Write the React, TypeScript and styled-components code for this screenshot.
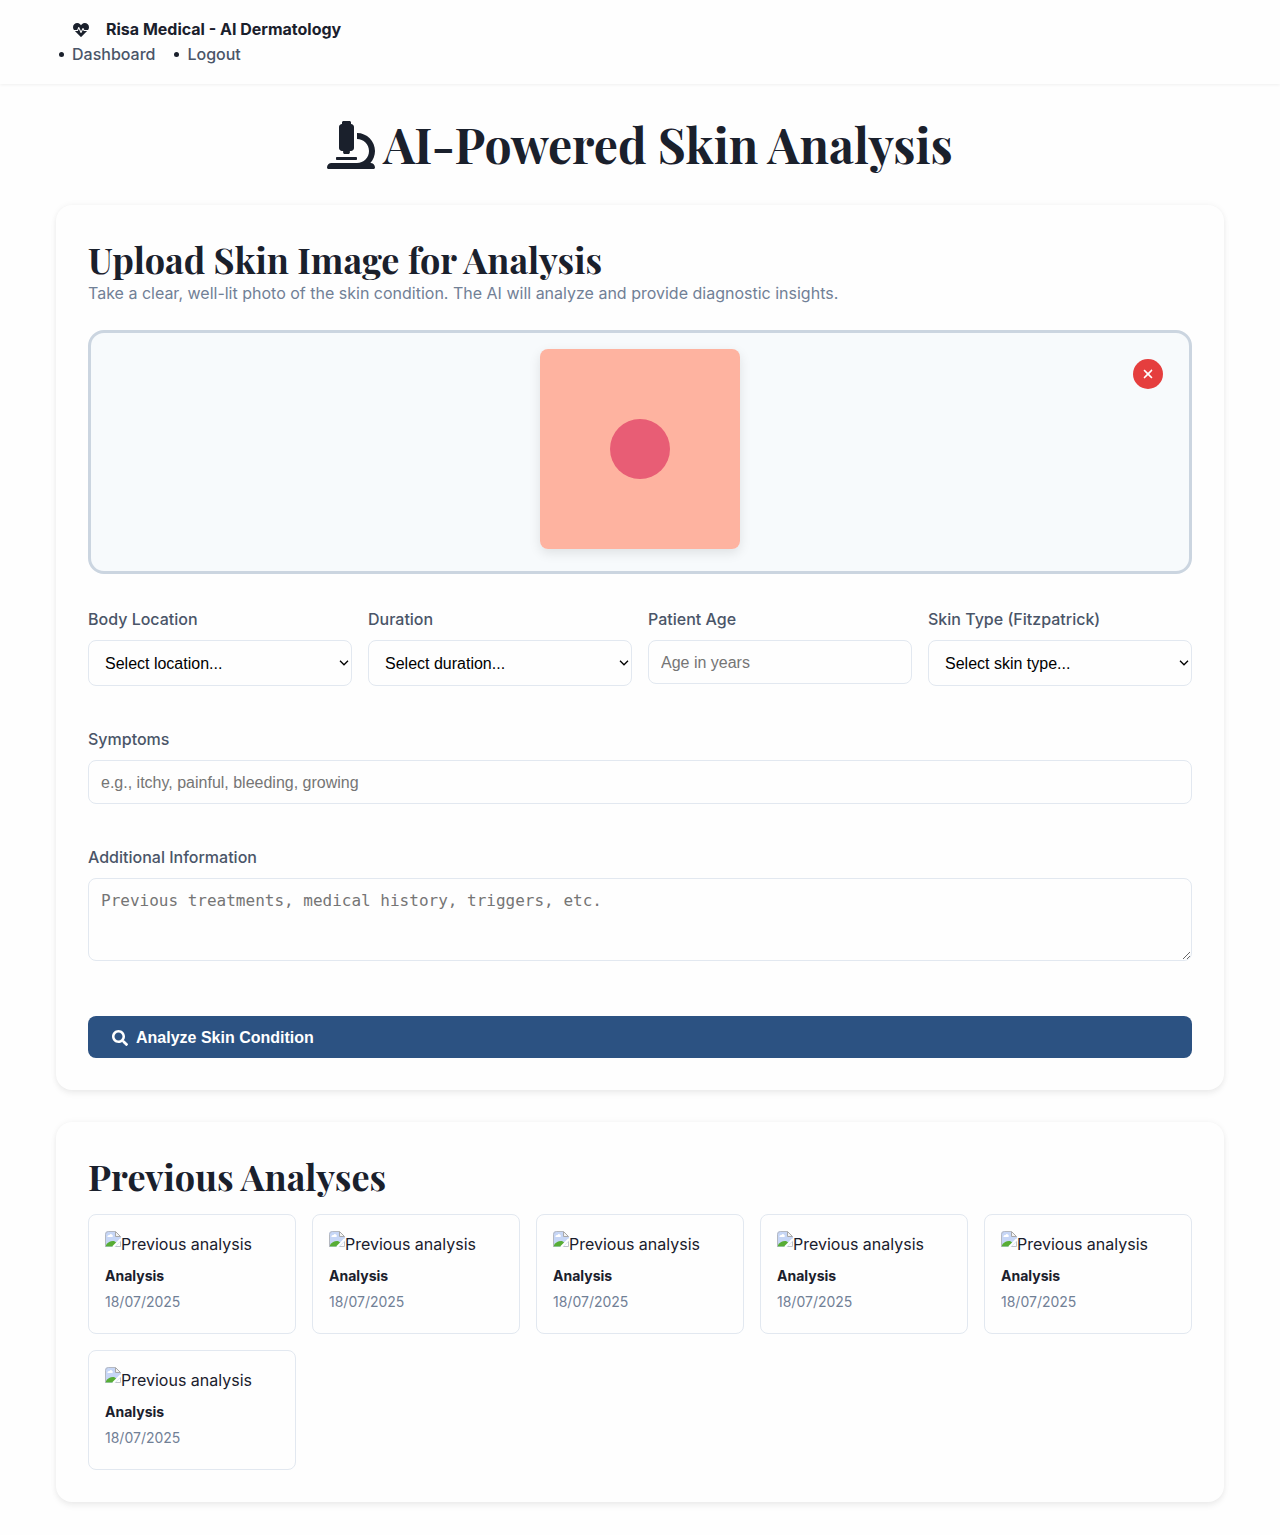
import React, { useState } from "react";
import styled, { createGlobalStyle } from "styled-components";
import { FaHeartbeat, FaMicroscope, FaSearch } from "react-icons/fa";
import { FaXmark } from "react-icons/fa6";

const sans = `Inter, "Liberation Sans", sans-serif`;
const control = `"Liberation Sans", Arial, sans-serif`;
const display = `"Playfair Display", "Liberation Serif", serif`;

const GlobalStyle = createGlobalStyle`
  *, *::before, *::after { box-sizing: border-box; }
  body {
    margin: 0;
    background: #fefefe;
    color: #1a202c;
    font-family: ${sans};
    font-size: 16px;
    line-height: 26px;
  }
  h1, h2, h3, p, ul { margin: 0; padding: 0; }
`;

const Header = styled.header`
  background: #fefefe;
  box-shadow: 0 1px 3px rgba(0, 0, 0, 0.06);
  padding: 17px 0;
  line-height: 25px;
`;

const Container = styled.div`
  max-width: 1200px;
  margin: 0 auto;
  padding: 0 16px;
`;

const Brand = styled.div`
  display: flex;
  align-items: center;
  gap: 17px;
  padding-left: 17px;
  font-weight: 700;
`;

const NavList = styled.ul`
  display: flex;
  gap: 19px;
  list-style: none;
  && { padding-left: 3px; }
`;

const NavItem = styled.li`
  display: flex;
  align-items: center;
  gap: 8px;

  &::before {
    content: "";
    width: 5px;
    height: 5px;
    border-radius: 50%;
    background: #1a202c;
  }
`;

const NavLink = styled.a`
  color: #4a5568;
  font-weight: 500;
  text-decoration: none;
`;

const Main = styled.main`
  display: flex;
  flex-direction: column;
  gap: 32px;
  padding-top: 32px;
  padding-bottom: 32px;
`;

const PageTitle = styled.h1`
  display: flex;
  align-items: center;
  justify-content: center;
  gap: 8px;
  font-family: ${display};
  font-size: 48px;
  font-weight: 700;
  line-height: 57px;
`;

const Card = styled.section`
  padding: 32px;
  border-radius: 16px;
  background: #fefefe;
  box-shadow: 0 4px 6px rgba(0, 0, 0, 0.05), 0 0 6px rgba(0, 0, 0, 0.05);
`;

const CardTitle = styled.h2`
  font-family: ${display};
  font-size: 36px;
  font-weight: 700;
  line-height: 44px;
`;

const Hint = styled.p`
  color: #718096;
  line-height: 25px;
`;

const UploadArea = styled.div`
  position: relative;
  display: flex;
  justify-content: center;
  margin: 24px 0 32px;
  padding: 16px 16px 22px;
  border: 3px solid #cbd5e0;
  border-radius: 16px;
  background: #f7fafc;
`;

const Preview = styled.svg`
  width: 200px;
  height: 200px;
  border-radius: 8px;
  box-shadow: 0 4px 12px rgba(0, 0, 0, 0.1);
`;

const RemoveButton = styled.button`
  position: absolute;
  top: 26px;
  right: 26px;
  display: flex;
  align-items: center;
  justify-content: center;
  width: 30px;
  height: 30px;
  padding: 0;
  border: 0;
  border-radius: 50%;
  background: #e53e3e;
  color: #fff;
  font-size: 14px;
  cursor: pointer;
`;

const Form = styled.form`
  display: flex;
  flex-direction: column;
  gap: 40px;
`;

const FieldGrid = styled.div`
  display: grid;
  grid-template-columns: repeat(auto-fit, minmax(250px, 1fr));
  align-items: start;
  gap: 16px;
`;

const Field = styled.div`
  display: flex;
  flex-direction: column;
  gap: 8px;
`;

const Label = styled.label`
  color: #4a5568;
  font-weight: 500;
`;

const Input = styled.input`
  width: 100%;
  height: 44px;
  padding: 13px 12px 11px;
  border: 1px solid #e2e8f0;
  border-radius: 8px;
  background: #fefefe;
  font-family: ${control};
  font-size: 16px;
`;

const SelectBox = styled.div`
  position: relative;
  display: grid;
`;

const Select = styled.select`
  appearance: none;
  width: 100%;
  height: 46px;
  padding: 12px 24px 12px 16px;
  border: 1px solid #e2e8f0;
  border-radius: 8px;
  background: #fefefe;
  color: #000;
  font-family: ${control};
  font-size: 16px;
`;

const Chevron = styled.svg`
  position: absolute;
  top: 20px;
  right: 3px;
  width: 10px;
  height: 6px;
  pointer-events: none;
`;

const TextArea = styled.textarea`
  width: 100%;
  height: 83px;
  padding: 12px;
  border: 1px solid #e2e8f0;
  border-radius: 8px;
  background: #fefefe;
  font-family: "DejaVu Sans Mono", monospace;
  font-size: 16px;
  resize: vertical;
`;

const SubmitButton = styled.button`
  display: flex;
  align-items: center;
  gap: 8px;
  height: 42px;
  margin-top: 15px;
  padding: 2px 24px 0;
  border: 0;
  border-radius: 8px;
  background: #2c5282;
  color: #fff;
  font-family: ${control};
  font-size: 16px;
  font-weight: 700;
  cursor: pointer;
`;

const HistoryGrid = styled.div`
  display: grid;
  grid-template-columns: repeat(auto-fill, minmax(200px, 1fr));
  gap: 16px;
  margin-top: 16px;
`;

const HistoryItem = styled.article`
  display: flex;
  flex-direction: column;
  padding: 16px 16px 20px;
  border: 1px solid #e2e8f0;
  border-radius: 8px;
`;

const Thumb = styled.div`
  display: flex;
  align-items: flex-start;
  margin-bottom: 8px;
`;

const ItemTitle = styled.h3`
  margin-bottom: 4px;
  font-size: 14px;
  font-weight: 700;
  line-height: 22px;
`;

const ItemDate = styled.p`
  color: #718096;
  font-size: 14px;
  line-height: 22px;
`;

const MissingImageIcon = () => (
  <svg width="16" height="16" viewBox="0 0 16 16" aria-hidden="true">
    <path d="M3.500 0H10l6 6v4l-6 6H0V3.500A3.500 3.500 0 0 1 3.500 0z" fill="#c6d6f6" />
    <path d="M0.500 16V3.500a3 3 0 0 1 3-3H10" fill="none" stroke="#b4b8c0" />
    <path d="M2.500 6a1.600 1.600 0 0 1 2-2 1.800 1.800 0 0 1 3 2z" fill="#fff" />
    <path d="M1 15.500V14c2-3 5-4.500 8-4l3 2-3.500 3.500z" fill="#57ad35" />
    <path d="M10.500 0.500l5 5h-5z" fill="#f3f3f3" stroke="#a8a8a8" />
    <path d="M8 16l8-8" stroke="#fff" strokeWidth="2" />
    <path d="M10.500 15.500h5v-5" fill="none" stroke="#c0c4cb" />
  </svg>
);

const selects = {
  location: ["Select location...", "Face", "Neck", "Chest", "Back", "Arms", "Legs"],
  duration: ["Select duration...", "Less than 1 week", "1-4 weeks", "1-6 months"],
  skinType: ["Select skin type...", "Type I", "Type II", "Type III", "Type IV", "Type V", "Type VI"],
};

type SelectFieldProps = { id: string; label: string; options: string[] };

const SelectField = ({ id, label, options }: SelectFieldProps) => (
  <Field>
    <Label htmlFor={id}>{label}</Label>
    <SelectBox>
      <Select id={id}>
        {options.map((option) => (
          <option key={option}>{option}</option>
        ))}
      </Select>
      <Chevron viewBox="0 0 10 6" aria-hidden="true">
        <path d="M1 0.800l4 4 4-4" fill="none" stroke="#000" strokeWidth="1.300" />
      </Chevron>
    </SelectBox>
  </Field>
);

const history = Array.from({ length: 6 }, (_, id) => ({ id, date: "18/07/2025" }));

export default function App() {
  const [hasImage, setHasImage] = useState(true);

  return (
    <>
      <GlobalStyle />
      <Header>
        <Container>
          <Brand>
            <FaHeartbeat size={16} />
            <span>Risa Medical - AI Dermatology</span>
          </Brand>
          <nav>
            <NavList>
              <NavItem><NavLink href="#dashboard">Dashboard</NavLink></NavItem>
              <NavItem><NavLink href="#logout">Logout</NavLink></NavItem>
            </NavList>
          </nav>
        </Container>
      </Header>
      <Container>
        <Main>
          <PageTitle>
            <FaMicroscope size={48} />
            <span>AI-Powered Skin Analysis</span>
          </PageTitle>

          <Card>
            <CardTitle>Upload Skin Image for Analysis</CardTitle>
            <Hint>Take a clear, well-lit photo of the skin condition. The AI will analyze and provide diagnostic insights.</Hint>
            {hasImage && (
              <UploadArea>
                <Preview viewBox="0 0 200 200" role="img" aria-label="Skin preview">
                  <rect width="200" height="200" fill="#feb3a0" />
                  <circle cx="100" cy="100" r="30" fill="#e85d75" />
                </Preview>
                <RemoveButton type="button" aria-label="Remove image" onClick={() => setHasImage(false)}>
                  <FaXmark />
                </RemoveButton>
              </UploadArea>
            )}
            <Form onSubmit={(event) => event.preventDefault()}>
              <FieldGrid>
                <SelectField id="location" label="Body Location" options={selects.location} />
                <SelectField id="duration" label="Duration" options={selects.duration} />
                <Field>
                  <Label htmlFor="age">Patient Age</Label>
                  <Input id="age" type="number" placeholder="Age in years" />
                </Field>
                <SelectField id="skin-type" label="Skin Type (Fitzpatrick)" options={selects.skinType} />
              </FieldGrid>
              <Field>
                <Label htmlFor="symptoms">Symptoms</Label>
                <Input id="symptoms" type="text" placeholder="e.g., itchy, painful, bleeding, growing" />
              </Field>
              <Field>
                <Label htmlFor="notes">Additional Information</Label>
                <TextArea id="notes" placeholder="Previous treatments, medical history, triggers, etc." />
              </Field>
              <SubmitButton type="submit">
                <FaSearch />
                Analyze Skin Condition
              </SubmitButton>
            </Form>
          </Card>

          <Card>
            <CardTitle>Previous Analyses</CardTitle>
            <HistoryGrid>
              {history.map((item) => (
                <HistoryItem key={item.id}>
                  <Thumb>
                    <MissingImageIcon />
                    <span>Previous analysis</span>
                  </Thumb>
                  <ItemTitle>Analysis</ItemTitle>
                  <ItemDate>{item.date}</ItemDate>
                </HistoryItem>
              ))}
            </HistoryGrid>
          </Card>
        </Main>
      </Container>
    </>
  );
}
